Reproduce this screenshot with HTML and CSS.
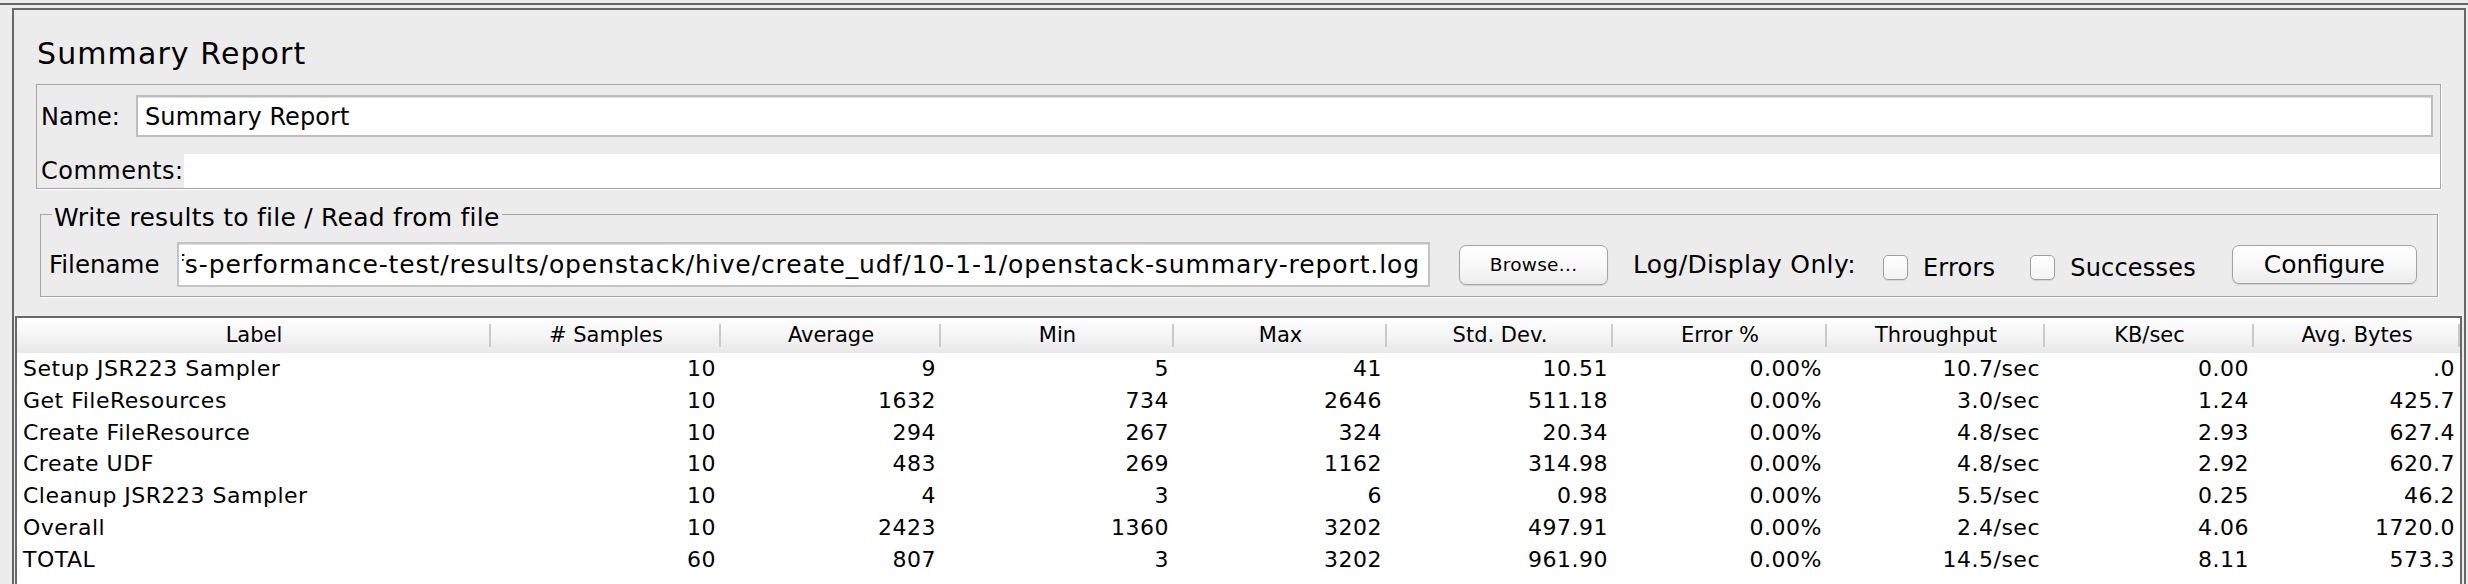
FILE: index.html
```html
<!DOCTYPE html>
<html>
<head>
<meta charset="utf-8">
<link rel="stylesheet" href="styles.css">
</head>
<body>
<div class="topline"></div>
<div class="panel">
  <div class="title">Summary Report</div>
  <div class="namebox">
    <div class="namerow">
      <span class="lbl-name">Name:</span>
      <div class="name-field">Summary Report</div>
    </div>
    <div class="commentsrow">
      <span class="lbl-comments">Comments:</span>
      <div class="comments-area"></div>
    </div>
  </div>
  <fieldset class="filebox">
    <legend>Write results to file / Read from file</legend>
    <div class="filerow">
      <span class="lbl-filename">Filename</span>
      <div class="file-field"><div class="file-clip"><span>/Users/jenkins/workspace/hive-udfs-performance-test/results/openstack/hive/create_udf/10-1-1/openstack-summary-report.log</span></div></div>
      <button class="btn browse">Browse...</button>
      <span class="lbl-only">Log/Display Only:</span>
      <label class="chk chk-errors"><span class="box"></span>Errors</label>
      <label class="chk chk-succ"><span class="box"></span>Successes</label>
      <button class="btn configure">Configure</button>
    </div>
  </fieldset>
  <div class="table">
    <div class="row head">
      <div>Label</div><div># Samples</div><div>Average</div><div>Min</div><div>Max</div><div>Std. Dev.</div><div>Error %</div><div>Throughput</div><div>KB/sec</div><div>Avg. Bytes</div>
    </div>
    <div class="row data">
      <div>Setup JSR223 Sampler</div><div>10</div><div>9</div><div>5</div><div>41</div><div>10.51</div><div>0.00%</div><div>10.7/sec</div><div>0.00</div><div>.0</div>
    </div>
    <div class="row data">
      <div>Get FileResources</div><div>10</div><div>1632</div><div>734</div><div>2646</div><div>511.18</div><div>0.00%</div><div>3.0/sec</div><div>1.24</div><div>425.7</div>
    </div>
    <div class="row data">
      <div>Create FileResource</div><div>10</div><div>294</div><div>267</div><div>324</div><div>20.34</div><div>0.00%</div><div>4.8/sec</div><div>2.93</div><div>627.4</div>
    </div>
    <div class="row data">
      <div>Create UDF</div><div>10</div><div>483</div><div>269</div><div>1162</div><div>314.98</div><div>0.00%</div><div>4.8/sec</div><div>2.92</div><div>620.7</div>
    </div>
    <div class="row data">
      <div>Cleanup JSR223 Sampler</div><div>10</div><div>4</div><div>3</div><div>6</div><div>0.98</div><div>0.00%</div><div>5.5/sec</div><div>0.25</div><div>46.2</div>
    </div>
    <div class="row data">
      <div>Overall</div><div>10</div><div>2423</div><div>1360</div><div>3202</div><div>497.91</div><div>0.00%</div><div>2.4/sec</div><div>4.06</div><div>1720.0</div>
    </div>
    <div class="row data">
      <div>TOTAL</div><div>60</div><div>807</div><div>3</div><div>3202</div><div>961.90</div><div>0.00%</div><div>14.5/sec</div><div>8.11</div><div>573.3</div>
    </div>
  </div>
</div>
</body>
</html>
```
FILE: styles.css
```css
html, body {
  margin: 0;
  padding: 0;
}
body {
  background: #ececec;
  font-family: "DejaVu Sans", "Liberation Sans", sans-serif;
  color: #000;
  height: 584px;
  overflow: hidden;
  display: flex;
  flex-direction: column;
}
.topline {
  flex: none;
  height: 2px;
  margin-top: 3px;
  background: #646464;
}
.panel {
  flex: 1;
  min-height: 0;
  margin: 3px 2px 0 12px;
  border: 2px solid #676767;
  border-bottom: none;
  display: flex;
  flex-direction: column;
}
.title {
  flex: none;
  font-size: 30px;
  line-height: 36px;
  letter-spacing: 1.1px;
  margin: 26px 0 0 23px;
}
.namebox {
  flex: none;
  margin: 12px 23px 0 22px;
  border: 1px solid #a6a6a6;
  box-shadow: 1px 1px 0 #fff;
  padding: 10px 0 0 4px;
}
.namerow {
  display: flex;
  align-items: center;
  height: 42px;
  padding-right: 7px;
}
.lbl-name {
  flex: none;
  width: 95px;
  font-size: 24px;
  padding-top: 2px;
}
.name-field {
  flex: 1;
  height: 42px;
  box-sizing: border-box;
  background: #fff;
  border: 2px solid #bdbdbd;
  box-shadow: inset 0 1px 0 #dedede;
  font-size: 24px;
  letter-spacing: 0.1px;
  line-height: 40px;
  padding: 0 0 0 7px;
}
.commentsrow {
  display: flex;
  margin-top: 17px;
  height: 34px;
}
.lbl-comments {
  flex: none;
  font-size: 24px;
  letter-spacing: 0.5px;
  line-height: 34px;
}
.comments-area {
  flex: 1;
  background: #fff;
}
.filebox {
  flex: none;
  margin: 7px 26px 0 26px;
  border: 1px solid #a6a6a6;
  box-shadow: 1px 1px 0 #fff;
  padding: 10px 0 9px 8px;
  min-width: 0;
}
.filebox legend {
  font-size: 25px;
  line-height: 28px;
  letter-spacing: 0.25px;
  padding: 8px 2px 0;
  margin-left: 3px;
}
.filerow {
  display: flex;
  align-items: center;
  height: 45px;
}
.lbl-filename {
  flex: none;
  width: 128px;
  font-size: 24.5px;
}
.file-field {
  flex: none;
  width: 1253px;
  height: 45px;
  box-sizing: border-box;
  background: #fff;
  border: 2px solid #c3c3c3;
  box-shadow: inset 0 1px 0 #e2e2e2;
  display: flex;
  padding: 0 8px 0 3px;
}
.file-clip {
  flex: 1;
  min-width: 0;
  display: flex;
  justify-content: flex-end;
  align-items: center;
  overflow: hidden;
  white-space: nowrap;
  font-size: 25px;
  letter-spacing: 0.9px;
}
.file-clip span {
  flex: none;
}
.btn {
  flex: none;
  font-family: "DejaVu Sans", "Liberation Sans", sans-serif;
  color: #000;
  background: linear-gradient(#ffffff, #f7f7f7 55%, #ececec);
  border: 1px solid #a3a3a3;
  border-radius: 7px;
  box-shadow: 0 1px 1px rgba(0,0,0,0.12);
  padding: 0;
}
.browse {
  margin-left: 29px;
  width: 149px;
  height: 40px;
  font-size: 18.5px;
  letter-spacing: 0.3px;
}
.configure {
  margin-left: 36px;
  width: 185px;
  height: 39px;
  font-size: 25px;
}
.lbl-only {
  flex: none;
  margin-left: 25px;
  font-size: 25px;
  letter-spacing: 0.35px;
}
.chk {
  flex: none;
  display: flex;
  align-items: center;
  font-size: 24px;
  letter-spacing: 0.2px;
  margin-top: 6px;
}
.chk-errors {
  margin-left: 27px;
}
.chk-succ {
  margin-left: 35px;
}
.box {
  width: 25px;
  height: 25px;
  box-sizing: border-box;
  margin-right: 15px;
  border: 1px solid #9f9f9f;
  border-radius: 5px;
  background: linear-gradient(#ffffff, #f3f3f3);
  box-shadow: 0 1px 1px rgba(0,0,0,0.1);
}
.table {
  flex: 1;
  margin: 19px 2px 0 1px;
  border: 2px solid #686868;
  border-bottom: none;
  background: #fff;
}
.row {
  display: grid;
  grid-template-columns: 474px 230px 220px 233px 213px 226px 214px 218px 209px 206px;
}
.head {
  height: 35px;
  background: linear-gradient(#ffffff, #f6f6f6 45%, #e8e8e8);
}
.head > div {
  text-align: center;
  font-size: 21px;
  line-height: 35px;
  white-space: nowrap;
  background: linear-gradient(#cacaca, #cacaca) no-repeat right 0 top 6px / 2px 23px;
}
.data {
  height: 31.8px;
}
.data > div {
  font-size: 22px;
  line-height: 31.8px;
  letter-spacing: 0.5px;
  text-align: right;
  padding-right: 5px;
  white-space: nowrap;
  overflow: hidden;
}
.data > div:first-child {
  text-align: left;
  padding-left: 6px;
  padding-right: 0;
}
```
